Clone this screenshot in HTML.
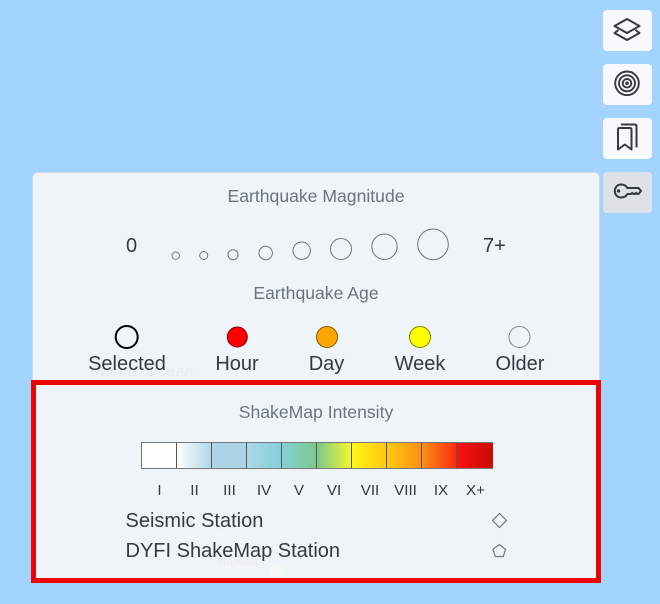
<!DOCTYPE html>
<html><head><meta charset="utf-8">
<style>
html,body{margin:0;padding:0;width:660px;height:604px;overflow:hidden;background:#a3d3ff;font-family:"Liberation Sans",sans-serif;color:#343a40}
div{position:absolute;box-sizing:border-box}
.t{white-space:nowrap;line-height:24px}
.c{transform:translateX(-50%)}
.h{color:#6c757d;font-size:17.6px}
.l{font-size:20px}
.btn{left:603px;width:49px;height:41px;background:#f8f9fa;border-radius:4px}
.btn svg{position:absolute;left:0;top:0}
.n{font-size:15.2px;top:479px;color:#343a40;line-height:24px}
.seg{top:442px;height:26.5px;width:35.2px;border-top:1.5px solid #777;border-bottom:1.5px solid #777;border-right:1px solid #555}
</style></head>
<body>
<div style="left:32px;top:172px;width:568px;height:410px;background:#eff4f9;border-radius:6px 6px 0 0;border:1px solid #d4dbe3"></div>
<div class="t" style="left:90px;top:360px;font-size:14.4px;font-style:italic;color:#e7ebef;letter-spacing:1.2px">Pacific Ocean</div>

<div class="btn" style="top:10px"><svg width="49" height="41" fill="none" stroke="#343a40" stroke-width="2" stroke-linejoin="round"><path d="M24 9 36.500 16 24 23 11.500 16Z"/><path d="M15.500 20 11.500 23 24 30 36.500 23 32.500 20"/></svg></div>
<div class="btn" style="top:64px"><svg width="49" height="41" fill="none" stroke="#343a40" stroke-width="1.9"><circle cx="24" cy="19.300" r="11.800"/><circle cx="24" cy="19.300" r="8"/><circle cx="24" cy="19.300" r="4.300"/><circle cx="24" cy="19.300" r="1.800" fill="#343a40" stroke="none"/></svg></div>
<div class="btn" style="top:118px"><svg width="49" height="41" fill="none" stroke="#343a40" stroke-width="2"><path d="M15 31.500V11.500Q15 10 16.500 10H27Q28.500 10 28.500 11.500V31.500L21.800 26.500Z" stroke-linejoin="round"/><path d="M18 6.500H31.800Q33.500 6.500 33.500 8.200V29.500"/></svg></div>
<div class="btn" style="top:172px;background:#dee2e6"><svg width="49" height="41" fill="none" stroke="#343a40" stroke-width="2"><path d="M18 12.500C20.800 12.500 23.200 13.800 24.300 16H35.500L38 19 35.500 22H34.300L33 20.800 31.700 22H30.500L29.200 20.800 27.900 22H24.300C23.200 24.200 20.800 25.500 18 25.500 14.300 25.500 11.800 22.600 11.800 19 11.800 15.400 14.300 12.500 18 12.500Z" stroke-linejoin="round"/><circle cx="15.500" cy="19" r="1.700" fill="#343a40" stroke="none"/></svg></div>

<div class="t h c" style="left:316px;top:184px">Earthquake Magnitude</div>
<div class="t l" style="left:126px;top:234px">0</div>
<div class="t l" style="left:483px;top:234px">7+</div>
<svg style="position:absolute;left:0;top:0" width="660" height="604" fill="none" stroke="#757575" stroke-width="1">
<circle cx="175.700" cy="255.700" r="3.700"/>
<circle cx="203.700" cy="255.500" r="4"/>
<circle cx="233" cy="254.700" r="5"/>
<circle cx="265.700" cy="253" r="6.700"/>
<circle cx="301.700" cy="250.700" r="8.700"/>
<circle cx="341" cy="249" r="10.500"/>
<circle cx="384.500" cy="246.700" r="12.700"/>
<circle cx="433" cy="244.300" r="15.300"/>
<circle cx="126.700" cy="337" r="11" stroke="#000" stroke-width="2"/>
<circle cx="237.300" cy="337" r="10" fill="#f00" stroke="#7f0000"/>
<circle cx="327" cy="337" r="10.500" fill="#ffa500" stroke="#7f5200"/>
<circle cx="420" cy="337" r="10.500" fill="#ff0" stroke="#7f7f00"/>
<circle cx="519.500" cy="337" r="10.500" stroke="#888"/>
</svg>
<div class="t h c" style="left:316px;top:281px">Earthquake Age</div>
<div class="t l c" style="left:127px;top:352px">Selected</div>
<div class="t l c" style="left:237px;top:352px">Hour</div>
<div class="t l c" style="left:326.500px;top:352px">Day</div>
<div class="t l c" style="left:420px;top:352px">Week</div>
<div class="t l c" style="left:520px;top:352px">Older</div>

<div style="left:31px;top:380px;width:570px;height:203px;border:5px solid #eb0505;background:#eff4f9"></div>
<div class="t c" style="left:316px;top:400px;font-size:17.6px;color:#6c757d">ShakeMap Intensity</div>

<div class="seg" style="left:141px;width:35.500px;background:#fff;border-left:1.5px solid #777"></div>
<div class="seg" style="left:176.500px;background:linear-gradient(90deg,#fff,#acd8e9)"></div>
<div class="seg" style="left:211.500px;background:#acd4e6"></div>
<div class="seg" style="left:246.500px;background:linear-gradient(90deg,#acd8e9,#83d0da)"></div>
<div class="seg" style="left:281.500px;background:linear-gradient(90deg,#83d0da,#7cc98c)"></div>
<div class="seg" style="left:316.500px;background:linear-gradient(90deg,#7cc98c,#f5f52f)"></div>
<div class="seg" style="left:351.500px;background:linear-gradient(90deg,#fff617,#fdc810)"></div>
<div class="seg" style="left:386.500px;background:linear-gradient(90deg,#fdc810,#fd9015)"></div>
<div class="seg" style="left:422px;background:linear-gradient(90deg,#fd9015,#fb2d10)"></div>
<div class="seg" style="left:457px;width:36px;background:linear-gradient(90deg,#fb1010,#c80c05);border-right:none"></div>

<div class="t n c" style="left:159.500px">I</div>
<div class="t n c" style="left:194.500px">II</div>
<div class="t n c" style="left:229.500px">III</div>
<div class="t n c" style="left:264px">IV</div>
<div class="t n c" style="left:299px">V</div>
<div class="t n c" style="left:334px">VI</div>
<div class="t n c" style="left:370px">VII</div>
<div class="t n c" style="left:405.500px">VIII</div>
<div class="t n c" style="left:441px">IX</div>
<div class="t n c" style="left:475.500px">X+</div>

<div class="t" style="left:218px;top:551px;font-size:11px;color:#ecebe9;letter-spacing:.3px">HAWAII</div>
<svg style="position:absolute;left:0;top:0" width="660" height="604" fill="none">
<ellipse cx="277" cy="571" rx="7" ry="6" fill="#f6f6f4"/>
<circle cx="218.500" cy="535.500" r="3" fill="#f4f5f6"/>
<path d="M499.500 513.500 506.500 520.500 499.500 527.500 492.500 520.500Z" stroke="#757575" stroke-width="1.200"/>
<path d="M499.300 544.500 505.500 549.300 503.300 556.500H495.300L493 549.300Z" stroke="#757575" stroke-width="1.200"/>
</svg>
<div class="t l" style="left:125.500px;top:509px">Seismic Station</div>
<div class="t l" style="left:125.500px;top:539px">DYFI ShakeMap Station</div>
</body></html>
